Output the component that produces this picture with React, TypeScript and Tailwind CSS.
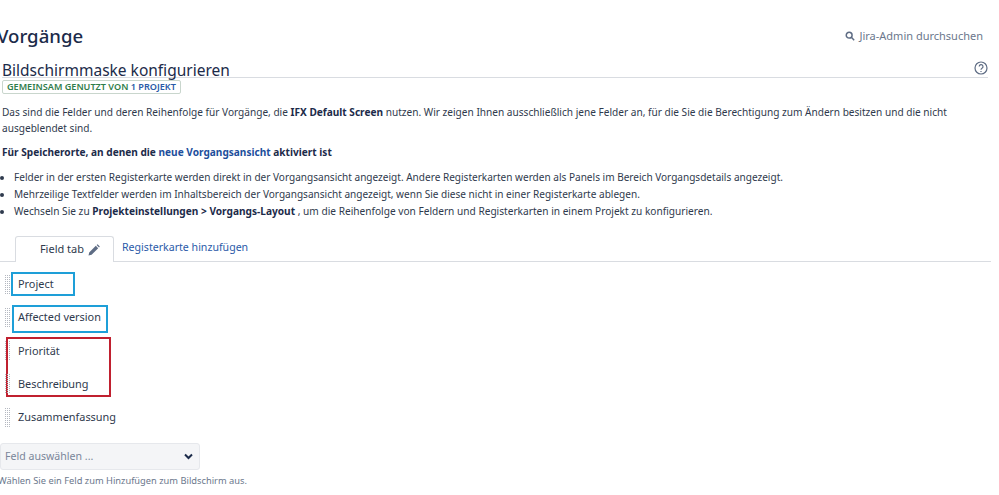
import React from "react";

const font = { fontFamily: '"Noto Sans", "Open Sans", sans-serif' };

function Grip() {
  const rows = Array.from({ length: 10 }, (_, i) => i);
  const cols = [0, 2, 4];
  return (
    <svg width="6" height="20" viewBox="0 0 6 20" className="shrink-0">
      {rows.map((r) =>
        cols.map((c) => <rect key={`${r}-${c}`} x={c} y={r * 2} width="1" height="1" fill="#b4b8c0" />)
      )}
    </svg>
  );
}

function Field({ label, box }: { label: string; box?: string }) {
  return (
    <div className="relative h-[33.25px] flex items-center pl-[5px] gap-[7px]">
      <Grip />
      <span className="text-[10.9px] text-[#2f3a4d] leading-none">{label}</span>
      {box && <span className={`absolute border-2 ${box}`} />}
    </div>
  );
}

export default function App() {
  return (
    <div className="w-[999px] h-[495px] overflow-hidden bg-white relative text-[#1f2a44]" style={font}>
      <div className="flex items-center justify-between h-[38px] mt-[17px] pr-[16px]">
        <h1 className="text-[18.6px] font-medium leading-none -ml-[3px] text-[#1c2b4a]">Vorgänge</h1>
        <div className="flex items-center gap-[4px] text-[11px] text-[#6b778c]">
          <svg width="10" height="10" viewBox="0 0 12 12" fill="none" stroke="#5e6c84" strokeWidth="1.8">
            <circle cx="5" cy="5" r="3.5" />
            <path d="M7.6 7.6 11 11" />
          </svg>
          <span>Jira-Admin durchsuchen</span>
        </div>
      </div>

      <div className="mr-[11px] ml-[2px] h-[23px] border-b border-[#d9dce1] flex items-end justify-between">
        <h2 className="text-[15.5px] leading-[20px] text-[#1c2b4a] -mb-[3px]">Bildschirmmaske konfigurieren</h2>
        <svg className="mb-[2px]" width="14" height="14" viewBox="0 0 14 14" fill="none" stroke="#5e6c84" strokeWidth="1.2">
          <circle cx="7" cy="7" r="6" />
          <path d="M5.2 5.5a1.9 1.9 0 1 1 2.8 1.7c-.7.4-1 .7-1 1.5" />
          <path d="M7 10v1" />
        </svg>
      </div>

      <div className="ml-[2px] mt-[2px] flex w-fit items-center h-[14px] px-[4px] border border-[#c9d6cd] rounded-[2px] text-[9.1px] font-semibold leading-none">
        <span className="text-[#2f7d4a]">GEMEINSAM GENUTZT VON&nbsp;</span>
        <span className="text-[#2a5aa8]">1 PROJEKT</span>
      </div>

      <p className="ml-[2px] mt-[10px] w-[965px] text-[10.1px] leading-[16px] text-[#2f3a4d]">
        Das sind die Felder und deren Reihenfolge für Vorgänge, die <b className="text-[#1c2b4a]">IFX Default Screen</b> nutzen. Wir zeigen Ihnen ausschließlich jene Felder an, für die Sie die Berechtigung zum Ändern besitzen und die nicht ausgeblendet sind.
      </p>

      <p className="ml-[2px] mt-[8px] text-[10.1px] leading-[16px] font-bold text-[#1c2b4a]">
        Für Speicherorte, an denen die <span className="text-[#1d4f9c]">neue Vorgangsansicht</span> aktiviert ist
      </p>

      <ul className="ml-[14px] mt-[9px] list-disc text-[10.05px] leading-[17px] text-[#2f3a4d]">
        <li>Felder in der ersten Registerkarte werden direkt in der Vorgangsansicht angezeigt. Andere Registerkarten werden als Panels im Bereich Vorgangsdetails angezeigt.</li>
        <li>Mehrzeilige Textfelder werden im Inhaltsbereich der Vorgangsansicht angezeigt, wenn Sie diese nicht in einer Registerkarte ablegen.</li>
        <li className="text-[10.15px]">Wechseln Sie zu <b className="text-[#1c2b4a]">Projekteinstellungen &gt; Vorgangs-Layout</b> , um die Reihenfolge von Feldern und Registerkarten in einem Projekt zu konfigurieren.</li>
      </ul>

      <div className="mt-[16px] h-[26px] mr-[8px] border-b border-[#d9dce1] flex items-end pl-[15px]">
        <div className="h-[26px] w-[99px] -mb-[1px] bg-white border border-b-0 border-[#d9dce1] rounded-t-[3px] flex items-center justify-end gap-[4px] pr-[13px] text-[11px] text-[#2f3a4d]">
          <span>Field tab</span>
          <svg width="12" height="12" viewBox="0 0 12 12" fill="#5e6c84"><path d="M0.5 11.5 1.2 8.4 7.8 1.8 10.2 4.2 3.6 10.8Z M8.6 1 9.6 0.2 11.8 2.4 11 3.4Z" /></svg>
        </div>
        <span className="ml-[8px] mb-[8px] text-[10.6px] leading-none text-[#2a5aa8]">Registerkarte hinzufügen</span>
      </div>

      <div className="mt-[6px]">
        <Field label="Project" box="left-[11px] top-[4px] w-[64px] h-[24px] border-[#1e9fd8]" />
        <Field label="Affected version" box="left-[12px] top-[4px] w-[96px] h-[28px] border-[#1e9fd8]" />
        <Field label="Priorität" box="left-[6px] top-[2px] w-[105px] h-[60px] border-[#c0202f]" />
        <Field label="Beschreibung" />
        <Field label="Zusammenfassung" />
      </div>

      <div className="mt-[9px] w-[200px] h-[27px] bg-[#f4f5f7] border border-[#e6e8ec] rounded-[3px] flex items-center justify-between pl-[4px] pr-[6px] text-[10.6px] text-[#7a869a]">
        <span>Feld auswählen ...</span>
        <svg width="9" height="7" viewBox="0 0 9 7" fill="none" stroke="#1c2b4a" strokeWidth="2"><path d="M1 1.5 4.5 5 8 1.5" /></svg>
      </div>
      <p className="mt-[4px] -ml-[2px] text-[9.3px] leading-[14px] text-[#6b778c]">Wählen Sie ein Feld zum Hinzufügen zum Bildschirm aus.</p>
    </div>
  );
}
